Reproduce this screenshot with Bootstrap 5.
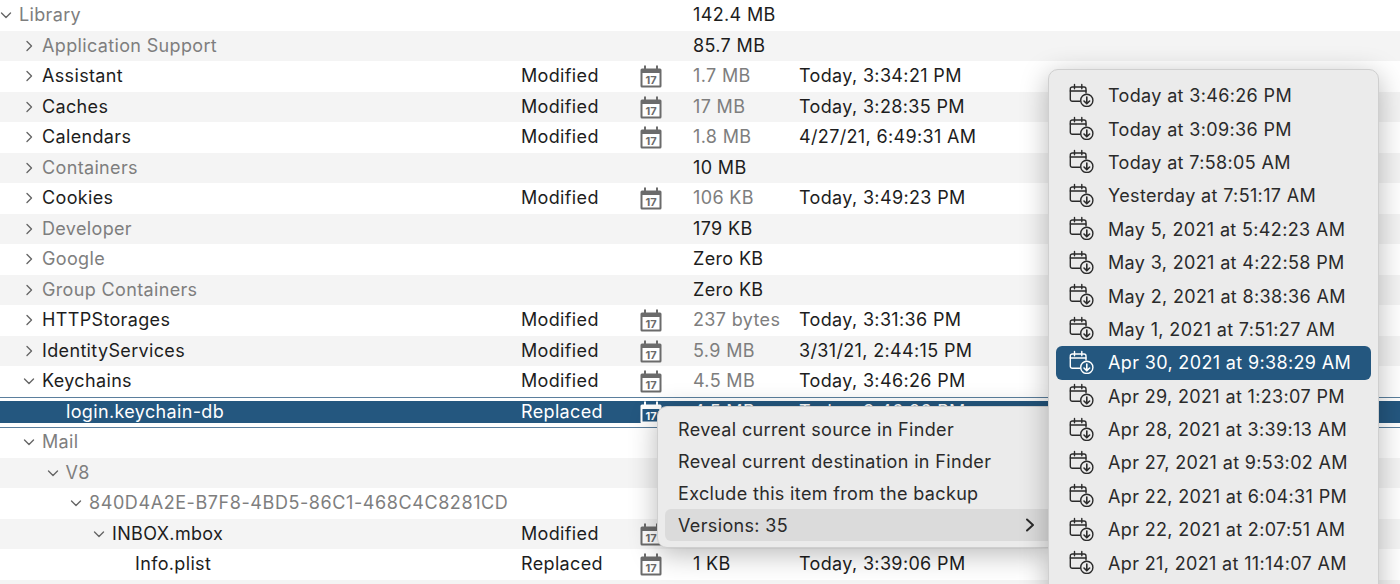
<!DOCTYPE html>
<html lang="en">
<head>
<meta charset="utf-8">
<title>Backup tree</title>
<link href="https://cdn.jsdelivr.net/npm/bootstrap@5.3.0/dist/css/bootstrap.min.css" rel="stylesheet">
<style>
html,body{height:100%;margin:0;overflow:hidden;background:#fff}
body{font-family:Inter,"Liberation Sans",sans-serif;font-size:18px;color:#1d1d1d;letter-spacing:.35px}
.stage{position:relative;width:1400px;height:584px;overflow:hidden}
.tr{height:30.5px;line-height:30px;white-space:nowrap}
.tr:nth-child(even){background:#f4f4f4}
.tr.sel{background:#24577f;color:#fff;position:relative}
.tr.sel::before,.tr.sel::after{content:"";position:absolute;left:0;right:0;background:#fff}
.tr.sel::before{top:0;height:4.5px;border-top:1.6px solid #5b7f9d}
.tr.sel::after{bottom:-1px;height:5px;border-bottom:1.6px solid #5b7f9d}
.cname{width:521px;flex:none;display:flex;align-items:center}
.cstat{width:119px;flex:none}
.cico{width:53px;flex:none;display:flex;align-items:center}
.csize{width:106px;flex:none}
.dim{color:#7e7e7e}
.sel .dim{color:#fff}
.uuid{letter-spacing:.58px}
.l0{padding-left:0}.l1{padding-left:24px}.l2{padding-left:47.500px}.l3{padding-left:71px}.l4{padding-left:94px}.l5{padding-left:135px}
.l2b{padding-left:66px}
.car{width:14px;margin-right:6px;flex:none;height:14px;color:#666;display:block;margin-left:-2px}
.l0 .car{margin-left:-1px}
.cal{width:22px;height:23px;color:#6b6b6b;display:block;margin-top:1px}
.sel .cal{color:#fff}
.cal text{font:700 11px Inter,"Liberation Sans",sans-serif;fill:currentColor;letter-spacing:0}
.cal .pane{fill:#fff}
.sel .cal .pane{fill:#24577f}
.menu-l.dropdown-menu,.menu-r.dropdown-menu{background:#ebebeb;border:1px solid #cfcfcf;border-radius:10px;box-shadow:0 6px 28px rgba(0,0,0,.28);font-size:18px;color:#2a2a2a;min-width:0;margin:0}
.menu-l.dropdown-menu{left:657px;top:406px;width:392px;height:142px;padding:6px 0 6px 7px;border-radius:10px 0 0 10px;z-index:5}
.menu-r.dropdown-menu{left:1048px;top:69px;width:331px;height:560px;padding:9px 7px;z-index:6}
.menu-l .dropdown-item{height:32px;line-height:31px;padding:0 0 0 13px;color:#2a2a2a;border-radius:6px 0 0 6px;display:flex;justify-content:space-between;align-items:center;background:transparent}
.menu-l .dropdown-item.hl{background:#dbdbdb}
.menu-l .sub{width:12px;height:16px;margin-right:12px;color:#2a2a2a}
.menu-r .dropdown-item{height:33.4px;line-height:33px;padding:0 0 0 13px;color:#2a2a2a;border-radius:6px;display:flex;align-items:center;gap:14px;background:transparent}
.menu-r .dropdown-item.active{background:#24577f;color:#fff}
.ver{width:25px;height:25px;flex:none;margin-top:-3px}
</style>
</head>
<body>
<svg width="0" height="0" class="d-none" aria-hidden="true">
  <symbol id="cd" viewBox="0 0 14 14"><path d="M2.500 5 7 9.500 11.500 5" fill="none" stroke="currentColor" stroke-width="1.400" stroke-linecap="round" stroke-linejoin="round"/></symbol>
  <symbol id="cr" viewBox="0 0 14 14"><path d="M5 2.500 9.500 7 5 11.500" fill="none" stroke="currentColor" stroke-width="1.400" stroke-linecap="round" stroke-linejoin="round"/></symbol>
  <symbol id="ver" viewBox="0 0 25 25" fill="none" stroke="currentColor" stroke-width="1.4">
    <path d="M11 19.300H3.300a2 2 0 0 1-2-2V7a2 2 0 0 1 2-2H15a2 2 0 0 1 2 2v4" stroke-linecap="round"/>
    <path d="M1.300 9H17M5.500 2.500v4.300M12.800 2.500v4.300" stroke-linecap="round"/>
    <circle cx="17.800" cy="18.400" r="6.100"/>
    <path d="M17.800 15v6.800M15 19l2.800 2.800 2.800-2.800" stroke-width="1.600" stroke-linecap="round" stroke-linejoin="round"/>
  </symbol>
  <symbol id="calicon" viewBox="0 0 22 23">
    <path d="M2 3.500h18a1.500 1.500 0 0 1 1.500 1.500v16a1.500 1.500 0 0 1-1.500 1.500H2A1.500 1.500 0 0 1 .5 21V5A1.500 1.500 0 0 1 2 3.500z" fill="currentColor"/>
    <path d="M5 .5v5M17 .5v5" stroke="currentColor" stroke-width="2"/>
  </symbol>
</svg>
<div class="stage">
  <div class="tree">
    <div class="tr d-flex align-items-center"><div class="cname l0"><svg class="car"><use href="#cd"/></svg><span class="dim">Library</span></div><div class="cstat"></div><div class="cico"></div><div class="csize">142.4 MB</div><div></div></div>
    <div class="tr d-flex align-items-center"><div class="cname l1"><svg class="car"><use href="#cr"/></svg><span class="dim">Application Support</span></div><div class="cstat"></div><div class="cico"></div><div class="csize">85.7 MB</div><div></div></div>
    <div class="tr d-flex align-items-center"><div class="cname l1"><svg class="car"><use href="#cr"/></svg><span>Assistant</span></div><div class="cstat">Modified</div><div class="cico"><svg class="cal" viewBox="0 0 22 23"><use href="#calicon"/><rect class="pane" x="2.500" y="8" width="17" height="12.500"/><text x="11" y="18.500" text-anchor="middle">17</text></svg></div><div class="csize dim">1.7 MB</div><div>Today, 3:34:21 PM</div></div>
    <div class="tr d-flex align-items-center"><div class="cname l1"><svg class="car"><use href="#cr"/></svg><span>Caches</span></div><div class="cstat">Modified</div><div class="cico"><svg class="cal" viewBox="0 0 22 23"><use href="#calicon"/><rect class="pane" x="2.500" y="8" width="17" height="12.500"/><text x="11" y="18.500" text-anchor="middle">17</text></svg></div><div class="csize dim">17 MB</div><div>Today, 3:28:35 PM</div></div>
    <div class="tr d-flex align-items-center"><div class="cname l1"><svg class="car"><use href="#cr"/></svg><span>Calendars</span></div><div class="cstat">Modified</div><div class="cico"><svg class="cal" viewBox="0 0 22 23"><use href="#calicon"/><rect class="pane" x="2.500" y="8" width="17" height="12.500"/><text x="11" y="18.500" text-anchor="middle">17</text></svg></div><div class="csize dim">1.8 MB</div><div>4/27/21, 6:49:31 AM</div></div>
    <div class="tr d-flex align-items-center"><div class="cname l1"><svg class="car"><use href="#cr"/></svg><span class="dim">Containers</span></div><div class="cstat"></div><div class="cico"></div><div class="csize">10 MB</div><div></div></div>
    <div class="tr d-flex align-items-center"><div class="cname l1"><svg class="car"><use href="#cr"/></svg><span>Cookies</span></div><div class="cstat">Modified</div><div class="cico"><svg class="cal" viewBox="0 0 22 23"><use href="#calicon"/><rect class="pane" x="2.500" y="8" width="17" height="12.500"/><text x="11" y="18.500" text-anchor="middle">17</text></svg></div><div class="csize dim">106 KB</div><div>Today, 3:49:23 PM</div></div>
    <div class="tr d-flex align-items-center"><div class="cname l1"><svg class="car"><use href="#cr"/></svg><span class="dim">Developer</span></div><div class="cstat"></div><div class="cico"></div><div class="csize">179 KB</div><div></div></div>
    <div class="tr d-flex align-items-center"><div class="cname l1"><svg class="car"><use href="#cr"/></svg><span class="dim">Google</span></div><div class="cstat"></div><div class="cico"></div><div class="csize">Zero KB</div><div></div></div>
    <div class="tr d-flex align-items-center"><div class="cname l1"><svg class="car"><use href="#cr"/></svg><span class="dim">Group Containers</span></div><div class="cstat"></div><div class="cico"></div><div class="csize">Zero KB</div><div></div></div>
    <div class="tr d-flex align-items-center"><div class="cname l1"><svg class="car"><use href="#cr"/></svg><span>HTTPStorages</span></div><div class="cstat">Modified</div><div class="cico"><svg class="cal" viewBox="0 0 22 23"><use href="#calicon"/><rect class="pane" x="2.500" y="8" width="17" height="12.500"/><text x="11" y="18.500" text-anchor="middle">17</text></svg></div><div class="csize dim">237 bytes</div><div>Today, 3:31:36 PM</div></div>
    <div class="tr d-flex align-items-center"><div class="cname l1"><svg class="car"><use href="#cr"/></svg><span>IdentityServices</span></div><div class="cstat">Modified</div><div class="cico"><svg class="cal" viewBox="0 0 22 23"><use href="#calicon"/><rect class="pane" x="2.500" y="8" width="17" height="12.500"/><text x="11" y="18.500" text-anchor="middle">17</text></svg></div><div class="csize dim">5.9 MB</div><div>3/31/21, 2:44:15 PM</div></div>
    <div class="tr d-flex align-items-center"><div class="cname l1"><svg class="car"><use href="#cd"/></svg><span>Keychains</span></div><div class="cstat">Modified</div><div class="cico"><svg class="cal" viewBox="0 0 22 23"><use href="#calicon"/><rect class="pane" x="2.500" y="8" width="17" height="12.500"/><text x="11" y="18.500" text-anchor="middle">17</text></svg></div><div class="csize dim">4.5 MB</div><div>Today, 3:46:26 PM</div></div>
    <div class="tr sel d-flex align-items-center"><div class="cname l2b"><span>login.keychain-db</span></div><div class="cstat">Replaced</div><div class="cico"><svg class="cal" viewBox="0 0 22 23"><use href="#calicon"/><rect class="pane" x="2.500" y="8" width="17" height="12.500"/><text x="11" y="18.500" text-anchor="middle">17</text></svg></div><div class="csize dim">4.5 MB</div><div>Today, 3:46:26 PM</div></div>
    <div class="tr d-flex align-items-center"><div class="cname l1"><svg class="car"><use href="#cd"/></svg><span class="dim">Mail</span></div><div class="cstat"></div><div class="cico"></div><div class="csize"></div><div></div></div>
    <div class="tr d-flex align-items-center"><div class="cname l2"><svg class="car"><use href="#cd"/></svg><span class="dim">V8</span></div><div class="cstat"></div><div class="cico"></div><div class="csize"></div><div></div></div>
    <div class="tr d-flex align-items-center"><div class="cname l3"><svg class="car"><use href="#cd"/></svg><span class="dim uuid">840D4A2E-B7F8-4BD5-86C1-468C4C8281CD</span></div><div class="cstat"></div><div class="cico"></div><div class="csize"></div><div></div></div>
    <div class="tr d-flex align-items-center"><div class="cname l4"><svg class="car"><use href="#cd"/></svg><span>INBOX.mbox</span></div><div class="cstat">Modified</div><div class="cico"><svg class="cal" viewBox="0 0 22 23"><use href="#calicon"/><rect class="pane" x="2.500" y="8" width="17" height="12.500"/><text x="11" y="18.500" text-anchor="middle">17</text></svg></div><div class="csize"></div><div></div></div>
    <div class="tr d-flex align-items-center"><div class="cname l5"><span>Info.plist</span></div><div class="cstat">Replaced</div><div class="cico"><svg class="cal" viewBox="0 0 22 23"><use href="#calicon"/><rect class="pane" x="2.500" y="8" width="17" height="12.500"/><text x="11" y="18.500" text-anchor="middle">17</text></svg></div><div class="csize">1 KB</div><div>Today, 3:39:06 PM</div></div>
    <div class="tr"></div>
  </div>

  <div class="dropdown-menu show menu-l">
    <div class="dropdown-item">Reveal current source in Finder</div>
    <div class="dropdown-item">Reveal current destination in Finder</div>
    <div class="dropdown-item">Exclude this item from the backup</div>
    <div class="dropdown-item hl">Versions: 35<svg class="sub" viewBox="0 0 12 16"><path d="M3 2.500 9 8l-6 5.500" fill="none" stroke="currentColor" stroke-width="2" stroke-linecap="round" stroke-linejoin="round"/></svg></div>
  </div>

  <div class="dropdown-menu show menu-r">
    <div class="dropdown-item"><svg class="ver"><use href="#ver"/></svg>Today at 3:46:26 PM</div>
    <div class="dropdown-item"><svg class="ver"><use href="#ver"/></svg>Today at 3:09:36 PM</div>
    <div class="dropdown-item"><svg class="ver"><use href="#ver"/></svg>Today at 7:58:05 AM</div>
    <div class="dropdown-item"><svg class="ver"><use href="#ver"/></svg>Yesterday at 7:51:17 AM</div>
    <div class="dropdown-item"><svg class="ver"><use href="#ver"/></svg>May 5, 2021 at 5:42:23 AM</div>
    <div class="dropdown-item"><svg class="ver"><use href="#ver"/></svg>May 3, 2021 at 4:22:58 PM</div>
    <div class="dropdown-item"><svg class="ver"><use href="#ver"/></svg>May 2, 2021 at 8:38:36 AM</div>
    <div class="dropdown-item"><svg class="ver"><use href="#ver"/></svg>May 1, 2021 at 7:51:27 AM</div>
    <div class="dropdown-item active"><svg class="ver"><use href="#ver"/></svg>Apr 30, 2021 at 9:38:29 AM</div>
    <div class="dropdown-item"><svg class="ver"><use href="#ver"/></svg>Apr 29, 2021 at 1:23:07 PM</div>
    <div class="dropdown-item"><svg class="ver"><use href="#ver"/></svg>Apr 28, 2021 at 3:39:13 AM</div>
    <div class="dropdown-item"><svg class="ver"><use href="#ver"/></svg>Apr 27, 2021 at 9:53:02 AM</div>
    <div class="dropdown-item"><svg class="ver"><use href="#ver"/></svg>Apr 22, 2021 at 6:04:31 PM</div>
    <div class="dropdown-item"><svg class="ver"><use href="#ver"/></svg>Apr 22, 2021 at 2:07:51 AM</div>
    <div class="dropdown-item"><svg class="ver"><use href="#ver"/></svg>Apr 21, 2021 at 11:14:07 AM</div>
    <div class="dropdown-item"><svg class="ver"><use href="#ver"/></svg></div>
  </div>
</div>
<script src="https://cdn.jsdelivr.net/npm/bootstrap@5.3.0/dist/js/bootstrap.bundle.min.js"></script>
</body>
</html>
